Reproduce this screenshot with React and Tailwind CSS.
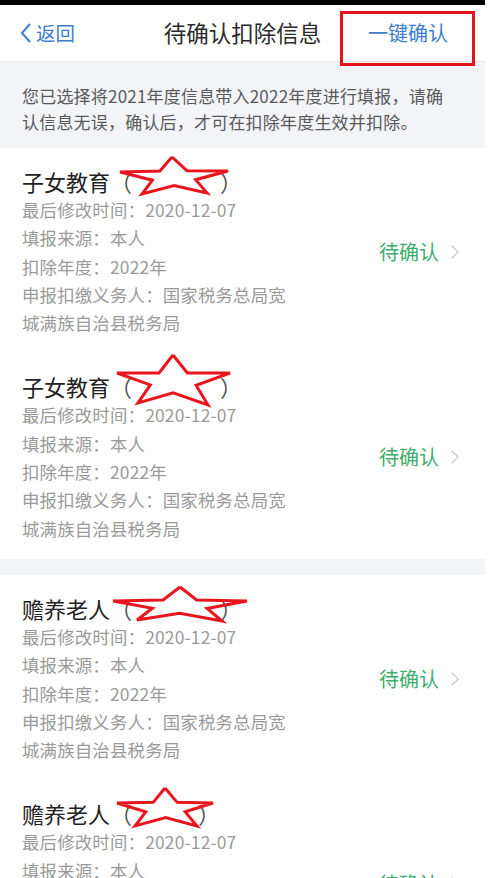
import React from "react";

const ITEMS = [
  { title: "子女教育", gap: "（　　　　）", star: [[172, 9], [228, 23], [207, 45], [142, 46], [120, 24]] },
  { title: "子女教育", gap: "（　　　　）", star: [[173, 2], [230, 20], [208, 52], [138, 50], [117, 20]] },
  { title: "赡养老人", gap: "（　　　　）", star: [[180, 12], [247, 26], [222, 46], [137, 45], [113, 26]] },
  { title: "赡养老人", gap: "（　　　）", star: [[165, 8], [213, 23], [197, 46], [135, 46], [117, 23]] },
];

// outline star from five outer points, inner points pulled toward the centre
function starPoints(outer) {
  const cx = outer.reduce((s, p) => s + p[0], 0) / 5;
  const cy = outer.reduce((s, p) => s + p[1], 0) / 5;
  const pts = [];
  outer.forEach((p, i) => {
    const n = outer[(i + 1) % 5];
    pts.push(p);
    const mx = (p[0] + n[0]) / 2;
    const my = (p[1] + n[1]) / 2;
    pts.push([cx + 0.5 * (mx - cx), cy + 0.5 * (my - cy)]);
  });
  pts.push(outer[0]);
  return pts.map((p) => p.join(",")).join(" ");
}

function Item({ item }) {
  return (
    <div className="relative flex items-center pl-[22px] pr-[25px] pt-[18px] pb-4">
      <div className="flex-1">
        <div className="text-[22px] leading-[30px] text-[#222]">
          {item.title}
          <span className="text-[#555]">{item.gap}</span>
        </div>
        <div className="text-[17.4px] leading-[28.3px] tracking-[0.2px] text-[#9a9a9a]">
          <p>最后修改时间：2020-12-07</p>
          <p>填报来源：本人</p>
          <p>扣除年度：2022年</p>
          <p>申报扣缴义务人：国家税务总局宽</p>
          <p>城满族自治县税务局</p>
        </div>
      </div>
      <div className="flex items-center gap-[11px]">
        <span className="text-[20px] text-[#3dae6e]">待确认</span>
        <svg width="10" height="16" viewBox="0 0 10 16" fill="none">
          <polyline points="1.5,1.5 8,8 1.5,14.5" stroke="#cfcfcf" strokeWidth="1.5" />
        </svg>
      </div>
      <svg className="pointer-events-none absolute inset-0 h-full w-full" fill="none">
        <polyline
          points={starPoints(item.star)}
          stroke="#e8151e"
          strokeWidth="3"
          strokeLinejoin="miter"
        />
      </svg>
    </div>
  );
}

export default function App() {
  return (
    <div className="relative h-[878px] w-[485px] overflow-hidden bg-white font-['Noto_Sans_CJK_SC','Noto_Sans',sans-serif]">
      <div className="h-[5px] bg-black" />

      {/* Header */}
      <div className="grid h-[57px] grid-cols-[1fr_auto_1fr] items-center border-b border-[#e6e6e8] bg-white">
        <div className="flex items-center pl-[19px] text-[#3c7dd0]">
          <svg width="14" height="22" viewBox="0 0 14 22" fill="none">
            <polyline points="11,2 3,11 11,20" stroke="#3c7dd0" strokeWidth="2" />
          </svg>
          <span className="ml-[3px] text-[19.5px]">返回</span>
        </div>
        <div className="text-[22.5px] text-[#2a2a2a]">待确认扣除信息</div>
        <div className="flex justify-end pr-[37px]">
          <span className="text-[20px] text-[#3c7dd0]">一键确认</span>
        </div>
      </div>

      {/* Notice */}
      <div className="bg-[#f3f4f8] pl-[22px] pr-[30px] pt-[21px] pb-[13px] text-[17px] leading-[26px] tracking-[0.2px] text-[#595959]">
        您已选择将2021年度信息带入2022年度进行填报，请确认信息无误，确认后，才可在扣除年度生效并扣除。
      </div>

      <div className="bg-white">
        <Item item={ITEMS[0]} />
        <Item item={ITEMS[1]} />
      </div>
      <div className="h-4 bg-[#f3f4f8]" />
      <div className="bg-white">
        <Item item={ITEMS[2]} />
        <Item item={ITEMS[3]} />
      </div>

      {/* annotation box */}
      <div className="pointer-events-none absolute left-[340px] top-[11px] h-[55px] w-[135px] border-[3px] border-[#e3141d]" />
    </div>
  );
}
